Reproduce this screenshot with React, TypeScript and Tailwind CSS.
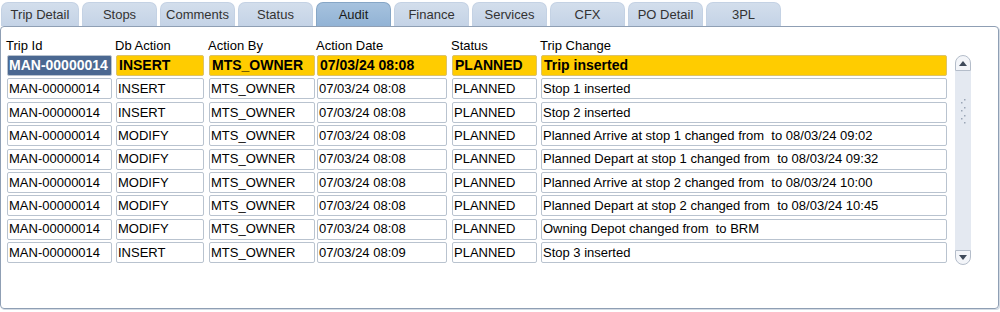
const tabs = ["Trip Detail", "Stops", "Comments", "Status", "Audit", "Finance", "Services", "CFX", "PO Detail", "3PL"];

const cols = [
  { label: "Trip Id", w: "w-[105px]", ml: "ml-0" },
  { label: "Db Action", w: "w-[88px]", ml: "ml-[4px]" },
  { label: "Action By", w: "w-[106px]", ml: "ml-[5px]" },
  { label: "Action Date", w: "w-[130px]", ml: "ml-[2px]" },
  { label: "Status", w: "w-[85px]", ml: "ml-[5px]" },
  { label: "Trip Change", w: "w-[406px]", ml: "ml-[4px]" },
];

const rows = [
  ["MAN-00000014", "INSERT", "MTS_OWNER", "07/03/24 08:08", "PLANNED", "Trip inserted"],
  ["MAN-00000014", "INSERT", "MTS_OWNER", "07/03/24 08:08", "PLANNED", "Stop 1 inserted"],
  ["MAN-00000014", "INSERT", "MTS_OWNER", "07/03/24 08:08", "PLANNED", "Stop 2 inserted"],
  ["MAN-00000014", "MODIFY", "MTS_OWNER", "07/03/24 08:08", "PLANNED", "Planned Arrive at stop 1 changed from  to 08/03/24 09:02"],
  ["MAN-00000014", "MODIFY", "MTS_OWNER", "07/03/24 08:08", "PLANNED", "Planned Depart at stop 1 changed from  to 08/03/24 09:32"],
  ["MAN-00000014", "MODIFY", "MTS_OWNER", "07/03/24 08:08", "PLANNED", "Planned Arrive at stop 2 changed from  to 08/03/24 10:00"],
  ["MAN-00000014", "MODIFY", "MTS_OWNER", "07/03/24 08:08", "PLANNED", "Planned Depart at stop 2 changed from  to 08/03/24 10:45"],
  ["MAN-00000014", "MODIFY", "MTS_OWNER", "07/03/24 08:08", "PLANNED", "Owning Depot changed from  to BRM"],
  ["MAN-00000014", "INSERT", "MTS_OWNER", "07/03/24 08:09", "PLANNED", "Stop 3 inserted"],
];

function Scrollbar() {
  return (
    <div className="ml-[8px] flex h-[210px] w-[16px] flex-col">
      <div className="flex h-[16px] items-center justify-center rounded-t-full border border-[#b4bdca] bg-[#f3f5f9]">
        <svg width="8" height="5" viewBox="0 0 8 5">
          <path d="M0 5 L4 0 L8 5 Z" fill="#3f4a5a" />
        </svg>
      </div>
      <div className="flex flex-1 flex-col items-center bg-[#e4e9f1] pt-[28px]">
        <svg width="8" height="26" viewBox="0 0 8 26">
          <g fill="#9aa6b6">
            <rect x="5" y="0" width="1.5" height="1.5" />
            <rect x="2" y="3" width="1.5" height="1.5" />
            <rect x="5" y="8" width="1.5" height="1.5" />
            <rect x="2" y="11" width="1.5" height="1.5" />
            <rect x="5" y="16" width="1.5" height="1.5" />
            <rect x="2" y="19" width="1.5" height="1.5" />
            <rect x="5" y="23" width="1.5" height="1.5" />
          </g>
        </svg>
      </div>
      <div className="flex h-[15px] items-center justify-center rounded-b-full border border-[#b4bdca] bg-[#f3f5f9]">
        <svg width="8" height="5" viewBox="0 0 8 5">
          <path d="M0 0 L8 0 L4 5 Z" fill="#3f4a5a" />
        </svg>
      </div>
    </div>
  );
}

export default function App() {
  return (
    <div className="h-[312px] w-[1000px] bg-white font-['Liberation_Sans',Arial,sans-serif] text-[13px] text-black">
      {/* tab strip */}
      <div className="flex h-[26px] items-end pl-[1px]">
        {tabs.map((t, i) => (
          <div
            key={t}
            className={`flex h-[24px] items-center justify-center rounded-t-[7px] border border-b-0 ${
              i === 0 ? "w-[78px]" : "ml-[3px] w-[75px]"
            } ${
              t === "Audit"
                ? "border-[#86a6c6] bg-gradient-to-b from-[#a6c2de] to-[#92b3d5] text-[#1a1a1a]"
                : "border-[#c4d2e4] bg-gradient-to-b from-[#d3deec] to-[#c4d3e6] text-[#333]"
            }`}
          >
            {t}
          </div>
        ))}
      </div>

      {/* panel */}
      <div className="h-[283px] w-[999px] rounded-[4px] border border-[#8f9fb4] pl-[6px] pt-[11px] shadow-[1px_1px_0_#d4dbe4]">
        <div className="ml-[-1px] flex h-[16px] items-center leading-[16px]">
          {cols.map((c) => (
            <div key={c.label} className={`${c.w} ${c.ml}`}>
              {c.label}
            </div>
          ))}
        </div>

        <div className="mt-[1px] flex">
          <div className="flex flex-col gap-[2.4px]">
            {rows.map((r, ri) => (
              <div key={ri} className="flex">
                {r.map((v, ci) => {
                  const first = ri === 0;
                  const sel = first && ci === 0;
                  return (
                    <div
                      key={ci}
                      className={`flex h-[21px] items-center overflow-hidden whitespace-pre rounded-[2px] border pl-[1px] ${cols[ci].w} ${cols[ci].ml} ${
                        sel
                          ? "border-[#b9c3cf] bg-[#4b6891] text-[14px] font-bold text-white"
                          : first
                          ? "border-[#dcc36a] bg-[#ffcc00] pl-[2px] text-[14px] font-bold"
                          : "border-[#b9c3cf] bg-white"
                      }`}
                    >
                      {v}
                    </div>
                  );
                })}
              </div>
            ))}
          </div>
          <Scrollbar />
        </div>
      </div>
    </div>
  );
}
